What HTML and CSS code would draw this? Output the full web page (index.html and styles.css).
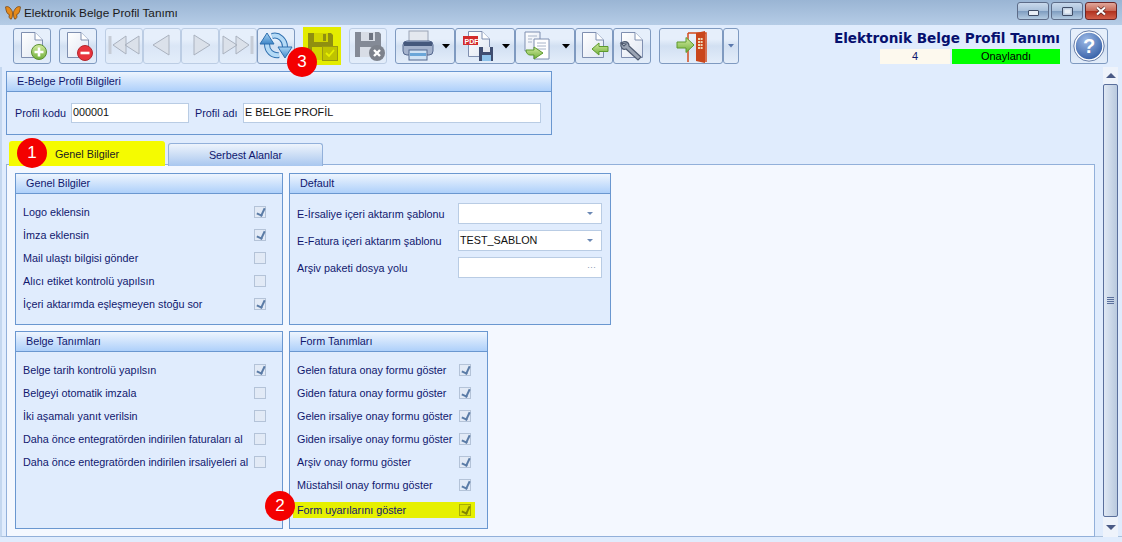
FILE: index.html
```html
<!DOCTYPE html>
<html lang="tr">
<head>
<meta charset="utf-8">
<title>Elektronik Belge Profil Tanımı</title>
<link rel="stylesheet" href="styles.css">
</head>
<body>
<svg class="defs" width="0" height="0">
  <defs>
    <linearGradient id="pg" x1="0" y1="0" x2="1" y2="1"><stop offset="0" stop-color="#ffffff"/><stop offset="1" stop-color="#dfe6f2"/></linearGradient>
    <linearGradient id="grn" x1="0" y1="0" x2="0" y2="1"><stop offset="0" stop-color="#d4eca0"/><stop offset="1" stop-color="#6fae3a"/></linearGradient>
    <linearGradient id="blu" x1="0" y1="0" x2="0" y2="1"><stop offset="0" stop-color="#a8d4f4"/><stop offset="1" stop-color="#3e86c8"/></linearGradient>
    <radialGradient id="help" cx=".4" cy=".3" r=".8"><stop offset="0" stop-color="#9cb9e6"/><stop offset="1" stop-color="#2a559f"/></radialGradient>
    <symbol id="doc" viewBox="0 0 22 26"><path d="M.5.5H14L21.5 8V25.5H.5Z" fill="url(#pg)" stroke="#7f8fb0"/><path d="M14 .5V8H21.5" fill="#fff" stroke="#7f8fb0"/></symbol>
    <symbol id="arrowback" viewBox="0 0 18 14"><path d="M1 7 8 1V4.500H17V9.500H8V13Z" fill="url(#grn)" stroke="#5c9a2c"/></symbol>
  </defs>
</svg>

<header class="titlebar">
  <svg class="logo" width="16" height="14" viewBox="0 0 18 16"><path d="M8.500 7C6 1 3 0 .5 1 1 6 2 9 5 10 3.500 12 5 15 7 15 8.500 13 8.500 10 8.500 7ZM9.500 7C12 1 15 0 17.500 1 17 6 16 9 13 10 14.500 12 13 15 11 15 9.500 13 9.500 10 9.500 7Z" fill="#e58a1c" stroke="#6b3d10" stroke-width=".8"/></svg>
  <span class="window-title">Elektronik Belge Profil Tanımı</span>
  <div class="window-controls">
    <span class="wc wc-min"><i class="wc-min-glyph"></i></span>
    <span class="wc wc-max"><i class="wc-max-glyph"></i></span>
    <span class="wc wc-close"><svg width="14" height="10" viewBox="0 0 14 10"><path d="M3 1.500 11 8.500M11 1.500 3 8.500" stroke="#4a2020" stroke-width="3.400" fill="none"/><path d="M3 1.500 11 8.500M11 1.500 3 8.500" stroke="#fff" stroke-width="2.200" fill="none"/></svg></span>
  </div>
</header>

<section class="toolbar">
  <div class="btn-group">
    <button class="tb"><svg width="36" height="34"><use href="#doc" x="7" y="3" width="22" height="26"/><circle cx="25" cy="23" r="7.500" fill="url(#grn)" stroke="#5b8f31"/><path d="M25 18.500v9M20.500 23h9" stroke="#fff" stroke-width="2.600"/></svg></button>
  </div>
  <div class="btn-group">
    <button class="tb"><svg width="36" height="34"><use href="#doc" x="7" y="3" width="22" height="26"/><circle cx="25" cy="24" r="7.500" fill="#e8333c" stroke="#b3262c"/><path d="M20.500 24h9" stroke="#fff" stroke-width="2.600"/></svg></button>
  </div>
  <div class="btn-group">
    <button class="tb tb-off"><svg width="36" height="34"><path d="M4 7v18" stroke="#c6ccd6" stroke-width="3"/><path d="M7 16 20 7V25ZM19 16 33 7V25Z" fill="#dbe1ea" stroke="#aab2bf"/></svg></button>
    <button class="tb tb-off"><svg width="36" height="34"><path d="M9 16 25 6V26Z" fill="#dbe1ea" stroke="#aab2bf"/></svg></button>
    <button class="tb tb-off"><svg width="36" height="34"><path d="M28 16 12 6V26Z" fill="#dbe1ea" stroke="#aab2bf"/></svg></button>
    <button class="tb tb-off"><svg width="36" height="34"><path d="M29 16 16 7V25ZM17 16 3 7V25Z" fill="#dbe1ea" stroke="#aab2bf"/><path d="M32 7v18" stroke="#c6ccd6" stroke-width="3"/></svg></button>
    <button class="tb"><svg width="36" height="34"><path d="M21 26C14 27 9 22 9 15" fill="none" stroke="#2f6fae" stroke-width="6"/><path d="M14 7C21 5 27 11 27 18" fill="none" stroke="#2f6fae" stroke-width="6"/><path d="M21 26C14 27 9 22 9 15" fill="none" stroke="#b4daf6" stroke-width="4"/><path d="M14 7C21 5 27 11 27 18" fill="none" stroke="#b4daf6" stroke-width="4"/><path d="M9 4 16 15H2Z" fill="url(#blu)" stroke="#2f6fae"/><path d="M27 29 34 18H20Z" fill="url(#blu)" stroke="#2f6fae"/></svg></button>
  </div>
  <div class="btn-group">
    <button class="tb tb-save"><svg width="38" height="38"><path d="M5 6H28L30 8V33H5Z" fill="#8f8f10"/><rect x="11" y="6" width="14" height="9" fill="#d0d400"/><rect x="20" y="7" width="3" height="7" fill="#8f8f10"/><rect x="9" y="20" width="11" height="13" fill="#d0d400"/><rect x="19.500" y="19.500" width="15" height="14" fill="#bfc300" stroke="#9a9a10"/><path d="M23 26 26 29 31 23" fill="none" stroke="#e8f000" stroke-width="1.800"/></svg></button>
  </div>
  <div class="btn-group">
    <button class="tb tb-off"><svg width="36" height="34"><path d="M5 3H29L31 5V28H5Z" fill="#848a96"/><rect x="11" y="3" width="14" height="9" fill="#d8dde6"/><rect x="19" y="4" width="4" height="7" fill="#6d7380"/><rect x="10" y="18" width="16" height="10" fill="#d8dde6"/><circle cx="27" cy="24" r="8" fill="#7d828c"/><path d="M24 21 30 27M30 21 24 27" stroke="#fff" stroke-width="2.400"/></svg></button>
  </div>
  <div class="btn-group">
    <button class="tb tb-wide"><svg width="58" height="34"><rect x="13" y="2" width="19" height="12" fill="#e4e8ef" stroke="#9aa4b6"/><rect x="7" y="12" width="30" height="14" rx="4" fill="#a4b2cc" stroke="#55688e"/><rect x="8" y="13" width="28" height="4" fill="#45587c"/><rect x="13" y="21" width="18" height="10" fill="#cfe2f4" stroke="#55688e"/><rect x="14" y="24" width="16" height="3" fill="#6aa6d8"/><path d="M46 15h8l-4 4.500Z" fill="#000"/></svg></button>
    <button class="tb tb-wide"><svg width="58" height="34"><use href="#doc" x="12" y="2" width="22" height="26"/><rect x="7" y="7" width="15" height="9" fill="#d32b2b"/><text class="pdf-text" x="8.500" y="14.500">PDF</text><path d="M23 18H37V32H23Z" fill="#3f4d70"/><rect x="27" y="18" width="7" height="5" fill="#e4e8f0"/><rect x="26" y="26" width="9" height="6" fill="#8ec2ea"/><path d="M46 15h8l-4 4.500Z" fill="#000"/></svg></button>
    <button class="tb tb-wide"><svg width="58" height="34"><path d="M9 3H24V22H9Z" fill="url(#pg)" stroke="#7f8fb0"/><path d="M18 10H33V30H18Z" fill="#fff" stroke="#7f8fb0"/><path d="M12 7h9M12 10h4M12 13h4M21 14h9M21 17h9M21 20h9" stroke="#a8b4c8"/><path d="M10 21 18 21V18L27 24 18 30V26H14C12 26 10 24 10 21Z" fill="url(#grn)" stroke="#5c9a2c"/><path d="M46 15h8l-4 4.500Z" fill="#000"/></svg></button>
    <button class="tb"><svg width="36" height="34"><use href="#doc" x="6" y="3" width="22" height="26"/><use href="#arrowback" x="15" y="13" width="18" height="14"/></svg></button>
    <button class="tb"><svg width="36" height="34"><use href="#doc" x="7" y="3" width="22" height="26"/><path d="M7 14C11 11 15 13 15 17L27 28 24 31 12 20C9 21 6 19 7 14L10 17 12 15Z" fill="#9aa4b4" stroke="#4e5a70" stroke-width="1.200"/></svg></button>
  </div>
  <div class="btn-group">
    <button class="tb tb-exit"><svg width="62" height="34"><path d="M28 4H46V33" fill="none" stroke="#d24b1e" stroke-width="1.500"/><path d="M28 4V33" stroke="#d24b1e" stroke-width="1.500"/><path d="M36 4 45 2V34L36 32Z" fill="#c9461c"/><path d="M38 10h5M38 13h5M38 16h5M38 19h5" stroke="#ecd9b8" stroke-width="2" stroke-dasharray="2 .6"/><path d="M17 13H26V8.500L34 16 26 23.500V19H17Z" fill="url(#grn)" stroke="#5c9a2c"/></svg></button>
    <button class="tb tb-drop"><svg width="14" height="34"><path d="M4 15h6l-3 3.500Z" fill="#5a78ac"/></svg></button>
  </div>
  <div class="form-heading">
    <div class="heading-text">Elektronik Belge Profil Tanımı</div>
    <div class="status-row"><span class="status-num">4</span><span class="status-ok">Onaylandı</span></div>
  </div>
  <button class="tb tb-help"><svg width="36" height="34"><circle cx="18" cy="17" r="14" fill="url(#help)" stroke="#fff" stroke-width="1.500"/><circle cx="18" cy="17" r="15.200" fill="none" stroke="#6a7fa8"/><text class="help-text" x="18" y="24">?</text></svg></button>
</section>

<div class="content">
  <main class="main">
    <section class="group group-profile">
      <h2 class="group-head">E-Belge Profil Bilgileri</h2>
      <div class="profile-body">
        <label class="lbl lbl-kod">Profil kodu</label>
        <span class="field field-kod">000001</span>
        <label class="lbl lbl-ad">Profil adı</label>
        <span class="field field-ad">E BELGE PROFİL</span>
      </div>
    </section>

    <nav class="tabs">
      <span class="tab tab-active">Genel Bilgiler<b class="badge badge-1">1</b></span>
      <span class="tab">Serbest Alanlar</span>
    </nav>

    <section class="tab-page">
      <div class="group-row group-row-top">
        <section class="group group-genel">
          <h2 class="group-head">Genel Bilgiler</h2>
          <div class="check-list">
            <div class="check-row"><span>Logo eklensin</span><i class="cb on"></i></div>
            <div class="check-row"><span>İmza eklensin</span><i class="cb on"></i></div>
            <div class="check-row"><span>Mail ulaştı bilgisi gönder</span><i class="cb"></i></div>
            <div class="check-row"><span>Alıcı etiket kontrolü yapılsın</span><i class="cb"></i></div>
            <div class="check-row"><span>İçeri aktarımda eşleşmeyen stoğu sor</span><i class="cb on"></i></div>
          </div>
        </section>
        <section class="group group-default">
          <h2 class="group-head">Default</h2>
          <div class="field-list">
            <div class="field-row"><span>E-İrsaliye içeri aktarım şablonu</span><span class="field field-combo"><em></em><i class="combo-arrow"></i></span></div>
            <div class="field-row"><span>E-Fatura içeri aktarım şablonu</span><span class="field field-combo"><em>TEST_SABLON</em><i class="combo-arrow"></i></span></div>
            <div class="field-row"><span>Arşiv paketi dosya yolu</span><span class="field field-combo"><em></em><i class="combo-dots">···</i></span></div>
          </div>
        </section>
      </div>
      <div class="group-row">
        <section class="group group-genel group-tall">
          <h2 class="group-head">Belge Tanımları</h2>
          <div class="check-list">
            <div class="check-row"><span>Belge tarih kontrolü yapılsın</span><i class="cb on"></i></div>
            <div class="check-row"><span>Belgeyi otomatik imzala</span><i class="cb"></i></div>
            <div class="check-row"><span>İki aşamalı yanıt verilsin</span><i class="cb"></i></div>
            <div class="check-row"><span>Daha önce entegratörden indirilen faturaları al</span><i class="cb"></i></div>
            <div class="check-row"><span>Daha önce entegratörden indirilen irsaliyeleri al</span><i class="cb"></i></div>
          </div>
        </section>
        <section class="group group-form group-tall">
          <h2 class="group-head">Form Tanımları</h2>
          <div class="check-list">
            <div class="check-row"><span>Gelen fatura onay formu göster</span><i class="cb on"></i></div>
            <div class="check-row"><span>Giden fatura onay formu göster</span><i class="cb on"></i></div>
            <div class="check-row"><span>Gelen irsaliye onay formu göster</span><i class="cb on"></i></div>
            <div class="check-row"><span>Giden irsaliye onay formu göster</span><i class="cb on"></i></div>
            <div class="check-row"><span>Arşiv onay formu göster</span><i class="cb on"></i></div>
            <div class="check-row"><span>Müstahsil onay formu göster</span><i class="cb on"></i></div>
            <div class="check-row check-mark"><span>Form uyarılarını göster</span><i class="cb on"></i><b class="badge badge-2">2</b></div>
          </div>
        </section>
      </div>
    </section>
  </main>
  <aside class="scrollbar">
    <span class="sb-btn"><i class="sb-up"></i></span>
    <span class="sb-thumb"><i class="sb-grip"></i></span>
    <span class="sb-btn sb-btn-down"><i class="sb-down"></i></span>
  </aside>
</div>
<b class="badge badge-3">3</b>
</body>
</html>
```
FILE: styles.css
```css
* { box-sizing: border-box; }
html, body { margin: 0; padding: 0; }
body {
  position: relative;
  width: 1122px;
  height: 542px;
  overflow: hidden;
  background: #e0ecfd;
  font: 10.800px "Liberation Sans", Arial, sans-serif;
  color: #10186e;
}
.defs { position: absolute; }

.titlebar {
  display: flex;
  align-items: center;
  height: 25px;
  padding: 0 5px 0 5px;
  background: linear-gradient(#9ab5d4, #b5cce6);
}
.logo { margin-right: 2px; }
.window-title { margin-left: 1px; font-size: 11.800px; color: #1a1a1a; }
.window-controls { display: flex; margin-left: auto; margin-top: -3px; gap: 2px; }
.wc {
  display: flex;
  align-items: center;
  justify-content: center;
  width: 32px;
  height: 18px;
  border: 1px solid #5d6c88;
  border-radius: 3px;
  background: linear-gradient(#c9d9ec 0, #a9c0da 48%, #7f9dc0 52%, #b4cbe2 100%);
}
.wc-close {
  border-color: #6b2626;
  background: linear-gradient(#e0a79a 0, #c96a58 48%, #b0321f 52%, #d2604a 100%);
}
.wc-min-glyph { width: 11px; height: 6px; margin-top: 4px; background: #e8eef6; border: 1px solid #3f4c66; border-radius: 1px; }
.wc-max-glyph { width: 11px; height: 9px; background: #e8eef6; border: 1px solid #3f4c66; border-radius: 1px; box-shadow: inset 0 0 0 1.500px #c0cfe2; }

.toolbar {
  display: flex;
  align-items: flex-start;
  gap: 8px;
  height: 42px;
  padding: 3px 0 0 13px;
}
.btn-group { display: flex; }
.tb {
  flex: none;
  display: block;
  width: 38px;
  height: 36px;
  padding: 0;
  border: 1px solid #7f9ac0;
  border-radius: 3px;
  background: linear-gradient(#e6effb 0, #e6effb 30%, #d2e0f2 50%, #e3edfa 100%);
}
.tb svg { display: block; }
.tb-off { border-color: #bccde4; background: linear-gradient(#e6effb 0, #e6effb 30%, #dae6f6 50%, #e3edfa 100%); }
.tb-wide { width: 60px; }
.tb-exit { width: 64px; }
.tb-drop { width: 16px; }
.tb-save { width: 38px; height: 38px; margin-top: -1px; border: 0; border-radius: 0; background: #e4ec00; }
.tb-help { margin: 0 14px 0 2px; }
.pdf-text { font: bold 7px "Liberation Sans", sans-serif; fill: #fff; }
.help-text { font: bold 20px "Liberation Sans", sans-serif; fill: #fff; text-anchor: middle; }

.form-heading { display: flex; flex-direction: column; align-items: flex-end; margin-left: auto; margin-top: 1px; }
.heading-text { font: bold 13.600px/18px "DejaVu Sans", sans-serif; color: #06106e; white-space: nowrap; }
.status-row { display: flex; gap: 2px; height: 15px; margin-top: 2px; line-height: 15px; color: #000; text-align: center; font-size: 11px; }
.status-num { width: 70px; background: #fdf9ee; color: #10186e; }
.status-ok { width: 108px; background: #00ff00; }

.content { display: flex; height: 470px; padding: 0 4px 0 4px; border-left: 2px solid #c4d7ef; border-bottom: 1px solid #a9c0dc; }
.main { width: 1089px; padding-top: 4px; flex: none; }

.group { border: 1px solid #6a97d0; background: #e0ecfd; }
.group-head {
  height: 20px;
  margin: 0;
  padding-left: 10px;
  border-bottom: 1px solid #6a97d0;
  background: linear-gradient(#eef5fe, #aed0fa);
  font: 10.800px/18px "Liberation Sans", Arial, sans-serif;
  color: #10186e;
}
.group-profile { width: 546px; height: 64px; }
.profile-body { display: flex; align-items: center; padding: 11px 0 0 8px; }
.lbl { white-space: nowrap; }
.lbl-kod { width: 56px; }
.lbl-ad { width: 48px; margin-left: 6px; }
.field {
  display: block;
  height: 20px;
  padding-left: 1px;
  border: 1px solid #b9cce4;
  background: #fff;
  color: #111;
  line-height: 17px;
}
.field-kod { width: 118px; }
.field-ad { width: 298px; }

.tabs { display: flex; align-items: flex-end; height: 25px; margin: 6px 0 0 3px; gap: 3px; position: relative; z-index: 1; }
.tab {
  position: relative;
  display: flex;
  align-items: center;
  justify-content: center;
  width: 155px;
  height: 23px;
  border: 1px solid #92b0da;
  border-bottom: 0;
  border-radius: 3px 3px 0 0;
  background: linear-gradient(#eef4fc, #a9c7ef);
}
.tab-active { width: 156px; height: 25px; border: 0; background: #f5fb00; color: #222; }
.tab-page {
  height: 373px;
  margin-top: -2px;
  padding: 8px 8px 0 8px;
  border: 1px solid #92b0da;
  background: #f4f8ff;
}
.group-row { display: flex; gap: 6px; }
.group-row-top { margin-bottom: 6px; }
.group-genel { width: 268px; height: 152px; }
.group-default { width: 322px; height: 152px; }
.group-form { width: 199px; }
.group-tall { height: 198px; }

.check-list { padding-top: 6px; }
.check-row {
  position: relative;
  display: flex;
  align-items: center;
  justify-content: space-between;
  height: 23px;
  padding: 0 16px 0 7px;
  white-space: nowrap;
}
.check-mark { margin: 6px 12px 0 3px; height: 16px; padding-left: 4px; padding-right: 4px; background: #e6f000; }
.cb {
  flex: none;
  position: relative;
  width: 12px;
  height: 12px;
  border: 1px solid #b4c3d8;
  background: #e2eaf6;
}
.cb.on::after {
  content: "";
  position: absolute;
  left: 3px;
  top: 0;
  width: 4px;
  height: 7px;
  border: solid #5a7ba6;
  border-width: 0 2px 2px 0;
  transform: rotate(25deg);
}
.check-mark .cb { background: #d9e000; border-color: #a8ae00; }
.check-mark .cb.on::after { border-color: #7f8400; }

.field-list { display: flex; flex-direction: column; gap: 6px; padding: 9px 8px 0 7px; }
.field-row { display: flex; align-items: center; justify-content: space-between; white-space: nowrap; }
.field-combo { display: flex; align-items: center; justify-content: space-between; width: 144px; height: 21px; border-width: 1px; padding-right: 8px; }
.field-combo em { font-style: normal; }
.combo-arrow { width: 0; height: 0; border: 3px solid transparent; border-top: 3px solid #6b88b4; border-bottom: 0; }
.combo-dots { font-style: normal; color: #8a99b0; letter-spacing: 0; font-size: 9px; margin-right: -3px; }

.scrollbar { display: flex; flex-direction: column; width: 15px; height: 470px; margin-left: 8px; }
.sb-btn { display: flex; align-items: center; justify-content: center; height: 17px; background: #eef3fb; flex: none; }
.sb-btn-down { height: 20px; }
.sb-up { border: 5px solid transparent; border-top: 0; border-bottom: 5px solid #4a5a86; }
.sb-down { border: 5px solid transparent; border-bottom: 0; border-top: 5px solid #4a5a86; }
.sb-thumb {
  flex: 1;
  display: flex;
  align-items: center;
  justify-content: center;
  border: 1px solid #5a6f9c;
  border-radius: 2px;
  background: linear-gradient(90deg, #dfe8f4, #b9c9de);
}
.sb-grip { width: 7px; height: 7px; background: repeating-linear-gradient(#5a6f9c 0 1px, transparent 1px 2px); }

.badge {
  position: absolute;
  display: flex;
  align-items: center;
  justify-content: center;
  width: 30px;
  height: 30px;
  border-radius: 50%;
  background: #f40000;
  color: #fff;
  font: 17px "Liberation Sans", sans-serif;
  z-index: 5;
}
.badge-1 { left: 8px; top: -3px; }
.badge-2 { left: -28px; top: -11px; }
.badge-3 { left: 287px; top: 47px; }
```
